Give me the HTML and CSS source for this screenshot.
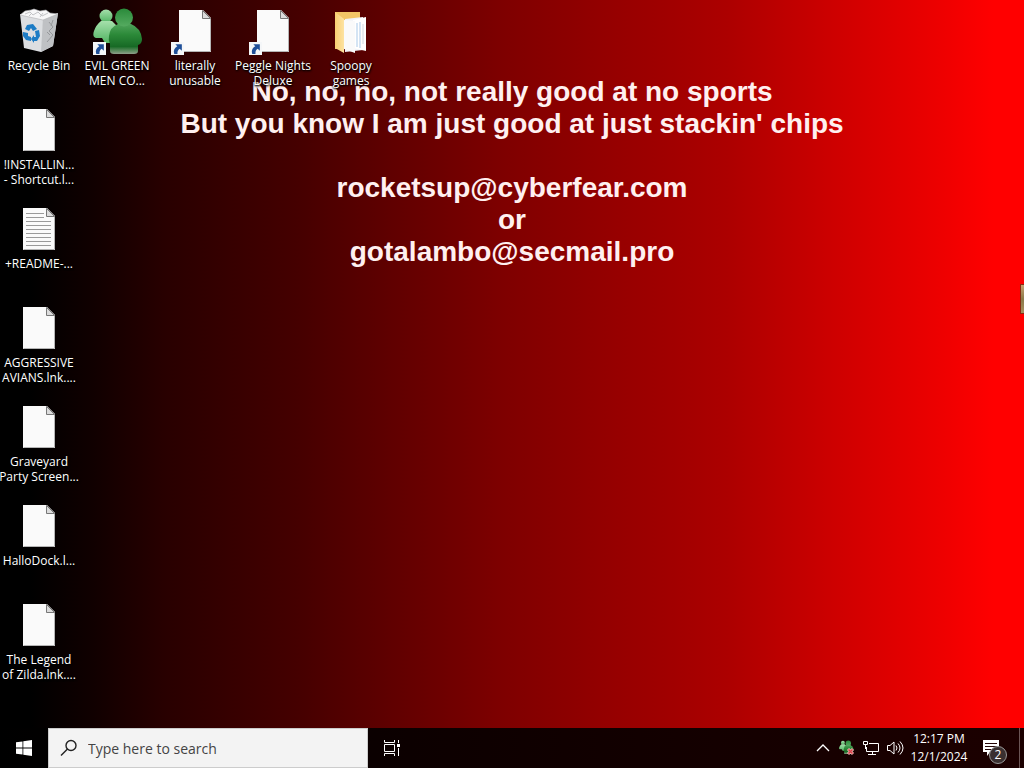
FILE: index.html
```html
<!DOCTYPE html>
<html lang="en">
<head>
  <meta charset="UTF-8">
  <title>Desktop</title>
  <link rel="stylesheet" href="styles.css">
</head>
<body>
  <svg class="defs" aria-hidden="true">
    <defs>
      <linearGradient id="gFront" x1="0" y1="0" x2="0" y2="1">
        <stop offset="0" stop-color="#4fa35a"/>
        <stop offset="0.35" stop-color="#2c8a39"/>
        <stop offset="0.75" stop-color="#176a25"/>
        <stop offset="0.9" stop-color="#5d8d60"/>
        <stop offset="1" stop-color="#8f9f8a"/>
      </linearGradient>
      <linearGradient id="gHead" x1="0" y1="0" x2="0" y2="1">
        <stop offset="0" stop-color="#2a8a3a"/>
        <stop offset="1" stop-color="#55ab60"/>
      </linearGradient>
      <linearGradient id="gBack" x1="0" y1="0" x2="0" y2="1">
        <stop offset="0" stop-color="#a5e0ab"/>
        <stop offset="1" stop-color="#52b463"/>
      </linearGradient>
      <linearGradient id="gFolder" x1="0" y1="0" x2="1" y2="0">
        <stop offset="0" stop-color="#f9cf72"/>
        <stop offset="1" stop-color="#fde3a2"/>
      </linearGradient>
      <symbol id="file" viewBox="0 0 48 48">
        <path d="M8 2h24l8 8v34H8z" fill="#fafafa"/>
        <path d="M8.500 43.500h31V10" fill="none" stroke="#b5b5b5"/>
        <path d="M31.500 2.500v8h8z" fill="#dcdcdc" stroke="#777"/>
      </symbol>
      <symbol id="arrow" viewBox="0 0 12 12">
        <path d="M0 0h12v12H0z" fill="#f4f6f8"/>
        <path d="M4 2h6v6L8 6.200C6.300 7.400 5.800 8.700 6 11H3C2 8 3 5.700 5.800 4z" fill="#1f4f98"/>
      </symbol>
      <symbol id="people" viewBox="0 0 50 48">
        <circle cx="13" cy="8" r="6.500" fill="url(#gBack)"/>
        <path d="M8 13h11l5 5v17H12l-3-5-6 0q-4-1-2-7 2-6 7-10z" fill="url(#gBack)"/>
        <path d="M25 16q-8 3-9 12-1 4 1 8v7q0 3 4 3h20q4 0 4-3v-6q4-1 4-6-1-11-11-15z" fill="url(#gFront)"/>
        <circle cx="31" cy="9.500" r="9" fill="url(#gHead)"/>
      </symbol>
    </defs>
  </svg>

  <main class="desktop">
    <div class="wallpaper-text">
      <p>No, no, no, not really good at no sports<br>
      But you know I am just good at just stackin' chips</p>
      <p>rocketsup@cyberfear.com<br>or<br>gotalambo@secmail.pro</p>
    </div>

    <div class="icons">
      <div class="column">
        <button class="icon">
          <svg viewBox="0 0 48 48">
            <path d="M5 6l30 2 8-3-5 33-12 6-17-4z" fill="#dcdee1"/>
            <path d="M28 10l15-5-5 33-12 6z" fill="#bfc1c4"/>
            <path d="M5 7l5-4 6-1 3-1 6 2 6-1 4 3 8 1-15 6z" fill="#f7f7f8" stroke="#b0b0b3" stroke-width="0.600"/>
            <path d="M10 6l5-2 3 3 5-3 4 4 6-3M14 8l3-3M25 9l3-4" fill="none" stroke="#c2c3c6"/>
            <path d="M34 14l4 5-4 4 4 4-6 7M38 12l-2 6M32 24l3 3" fill="none" stroke="#96989b"/>
            <g fill="#1d7cc5">
              <path d="M12 17l6-1 4 5-4 2-2-3-2 3-4-2z"/>
              <path d="M8 24l5 1 0 3 3 1v4l-5-1-3-4z"/>
              <path d="M20 23l4-1 1 6-3 5h-3v2l-3-4 3-4v2h2z"/>
            </g>
          </svg>
          <span>Recycle Bin</span>
        </button>
        <button class="icon">
          <svg><use href="#file"/></svg>
          <span>!INSTALLIN...<br>- Shortcut.l...</span>
        </button>
        <button class="icon">
          <svg viewBox="0 0 48 48">
            <use href="#file"/>
            <path d="M11 7.500h18M11 11.500h18M11 15.500h25M11 19.500h25M11 23.500h25M11 27.500h25M11 31.500h25M11 35.500h25M11 39.500h25" stroke="#9a9a9a"/>
          </svg>
          <span>+README-...</span>
        </button>
        <button class="icon">
          <svg><use href="#file"/></svg>
          <span>AGGRESSIVE<br>AVIANS.lnk....</span>
        </button>
        <button class="icon">
          <svg><use href="#file"/></svg>
          <span>Graveyard<br>Party Screen...</span>
        </button>
        <button class="icon">
          <svg><use href="#file"/></svg>
          <span>HalloDock.l...</span>
        </button>
        <button class="icon">
          <svg><use href="#file"/></svg>
          <span>The Legend<br>of Zilda.lnk....</span>
        </button>
      </div>

      <div class="column">
        <button class="icon">
          <svg viewBox="0 0 48 48">
            <use href="#people" width="50" height="48"/>
            <use href="#arrow" x="0" y="34" width="13" height="13"/>
          </svg>
          <span>EVIL GREEN<br>MEN CO...</span>
        </button>
      </div>
      <div class="column">
        <button class="icon">
          <svg viewBox="0 0 48 48">
            <use href="#file"/>
            <use href="#arrow" x="0" y="34" width="13" height="13"/>
          </svg>
          <span>literally<br>unusable</span>
        </button>
      </div>
      <div class="column">
        <button class="icon">
          <svg viewBox="0 0 48 48">
            <use href="#file"/>
            <use href="#arrow" x="0" y="34" width="13" height="13"/>
          </svg>
          <span>Peggle Nights<br>Deluxe</span>
        </button>
      </div>
      <div class="column">
        <button class="icon">
          <svg viewBox="0 0 48 48">
            <path d="M8 4h25v37H8z" fill="#f3c566"/>
            <path d="M18 11l18-2v33l-18 2z" fill="#f2f4f8"/>
            <path d="M26 12l13-3v34l-13-3z" fill="#fff"/>
            <path d="M30 15v24M33 14v26" stroke="#a9c9e8"/>
            <path d="M36 16v20" stroke="#cfd8e0"/>
            <path d="M17 12l11 1v32l-11-4z" fill="#fafafa"/>
            <path d="M8 4l9 7v34l-9-5z" fill="url(#gFolder)"/>
          </svg>
          <span>Spoopy<br>games</span>
        </button>
      </div>
    </div>
    <div class="edge"></div>
  </main>

  <footer class="taskbar">
    <button class="start" aria-label="Start">
      <svg width="16" height="16" viewBox="0 0 16 16" fill="#fff">
        <path d="M0 2.300l6.500-.9v6.200H0zM7.300 1.300L16 0v7.600H7.300zM0 8.400h6.500v6.200L0 13.700zM7.300 8.400H16V16l-8.700-1.300z"/>
      </svg>
    </button>
    <label class="search">
      <svg width="18" height="18" viewBox="0 0 18 18" fill="none" stroke="#222" stroke-width="1.400">
        <circle cx="11" cy="6.500" r="5"/>
        <path d="M7.500 10L1 16.500"/>
      </svg>
      <input type="text" placeholder="Type here to search" aria-label="Search">
    </label>
    <button class="task-view" aria-label="Task view">
      <svg width="16" height="16" viewBox="0 0 16 16" fill="none" stroke="#fff">
        <path d="M.5 0v2.500h10V0M.5 4.500h10v7H.5zM.5 16v-2.500h10V16M14.500 0v3M14.500 8v8"/>
        <path d="M13 4h3v3h-3z" fill="#fff" stroke="none"/>
      </svg>
    </button>

    <div class="tray">
      <button aria-label="Show hidden icons">
        <svg width="16" height="16" viewBox="0 0 16 16" fill="none" stroke="#fff" stroke-width="1.300">
          <path d="M2 11l6-6 6 6"/>
        </svg>
      </button>
      <button aria-label="Green men">
        <svg width="16" height="16" viewBox="0 0 16 16">
          <use href="#people" width="15" height="15"/>
          <path d="M9 9l5 5M14 9l-5 5" stroke="#f3b6b6" stroke-width="3"/>
          <path d="M9.500 9.500l4 4M13.500 9.500l-4 4" stroke="#d8434a" stroke-width="1.500"/>
        </svg>
      </button>
      <button aria-label="Network">
        <svg width="16" height="16" viewBox="0 0 16 16" fill="none" stroke="#fff">
          <path d="M6 3.500h9.500v8H3.500V7M9.500 12v3M5 14.500h8M.5 1.500h4v3h-4zM2.500 5v4"/>
        </svg>
      </button>
      <button aria-label="Volume">
        <svg width="18" height="16" viewBox="0 0 18 16" fill="none" stroke="#fff">
          <path d="M1.500 5.500h2.500l4-3.500v12l-4-3.500H1.500zM10 5.500q2 2.500 0 5M12 3.500q4 4.500 0 9M14 1.500q6 6.500 0 13"/>
        </svg>
      </button>
      <button class="clock">12:17 PM<br>12/1/2024</button>
      <button class="notify" aria-label="2 notifications">
        <svg width="16" height="16" viewBox="0 0 16 16">
          <path d="M0 0h16v12H7l-3 4v-4H0z" fill="#fff"/>
          <path d="M2 3.500h12M2 6.500h12M2 9.500h8" stroke="#250606"/>
        </svg>
        <span class="badge">2</span>
      </button>
      <button class="show-desktop" aria-label="Show desktop"></button>
    </div>
  </footer>
</body>
</html>
```

FILE: styles.css
```css
* {
  box-sizing: border-box;
}
body {
  margin: 0;
  height: 100vh;
  display: flex;
  flex-direction: column;
  overflow: hidden;
  font-family: "Open Sans", "Noto Sans", sans-serif;
  color: #fff;
  background: #000;
}
button {
  padding: 0;
  border: none;
  background: none;
  color: inherit;
  font: inherit;
  cursor: default;
}
.defs {
  position: absolute;
  width: 0;
  height: 0;
}

/* desktop */
.desktop {
  position: relative;
  flex: 1;
  display: grid;
  min-height: 0;
  background: linear-gradient(to right, #000 3%, #100000 9%, #280000 16%, #450000 29%, #620000 39%, #7e0000 49%, #960000 60%, #ac0000 71%, #cc0000 81%, #ee0000 92%, #f00 97%);
}
.wallpaper-text,
.icons {
  grid-area: 1 / 1;
}
.wallpaper-text {
  padding-top: 76px;
  text-align: center;
  font: bold 28px/32px "Liberation Sans", Arial, sans-serif;
  color: #fff0f0;
}
.wallpaper-text p {
  margin: 0 0 32px;
}
.icons {
  display: flex;
  align-items: flex-start;
}
.column {
  display: flex;
  flex-direction: column;
}
.icon {
  display: flex;
  flex-direction: column;
  align-items: center;
  width: 78px;
  height: 99px;
  padding-top: 8px;
  font-size: 12px;
  line-height: 15px;
  white-space: nowrap;
  text-shadow: 0 1px 2px #000, 1px 1px 2px #000;
}
.icon svg {
  width: 48px;
  height: 48px;
  margin-bottom: 2px;
  overflow: visible;
}
.edge {
  position: absolute;
  top: 284px;
  right: 0;
  width: 4px;
  height: 30px;
  border: 1px solid #8a2a12;
  border-right: none;
  background: linear-gradient(#c8a070, #8a7a4a 50%, #a89060);
}

/* taskbar */
.taskbar {
  display: flex;
  height: 40px;
  background: linear-gradient(to right, #000, #0c0000 40%, #1c0000);
}
.start,
.task-view {
  display: grid;
  place-items: center;
  width: 48px;
}
.search {
  display: flex;
  align-items: center;
  gap: 10px;
  width: 320px;
  padding: 0 11px;
  border: 1px solid #ccc;
  background: #f3f3f3;
}
.search input {
  flex: 1;
  min-width: 0;
  padding: 0;
  border: none;
  outline: none;
  background: none;
  font: 14px "Open Sans", "Noto Sans", sans-serif;
}
.search input::placeholder {
  color: #444;
}
.tray {
  display: flex;
  margin-left: auto;
}
.tray button {
  display: grid;
  place-items: center;
  width: 24px;
}
.tray .clock {
  display: block;
  width: 64px;
  font-size: 12px;
  line-height: 18px;
  white-space: nowrap;
}
.tray .notify {
  position: relative;
  width: 48px;
  padding-right: 8px;
}
.badge {
  position: absolute;
  left: 18px;
  top: 18px;
  width: 18px;
  height: 18px;
  border: 1px solid #999;
  border-radius: 50%;
  background: #3a3030;
  font-size: 12px;
  line-height: 16px;
  text-align: center;
}
.tray .show-desktop {
  width: 5px;
  border-left: 1px solid #6b5555;
}
```
